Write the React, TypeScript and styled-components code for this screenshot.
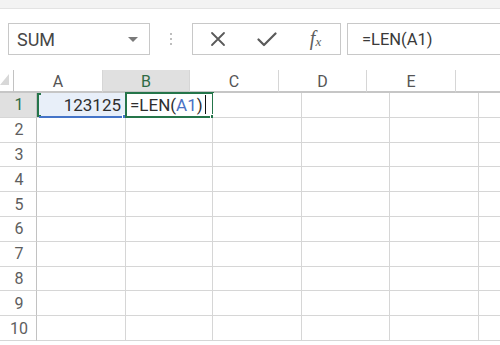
import React from "react";
import styled, { createGlobalStyle } from "styled-components";

const GlobalStyle = createGlobalStyle`
  html, body { margin: 0; padding: 0; background: #ffffff; }
  body {
    font-family: Roboto, "Liberation Sans", sans-serif;
    width: 500px;
    height: 345px;
    overflow: hidden;
  }
`;

const GREEN = "#25754a";
const BLUE = "#4474c8";
const GRID = "#d6d6d6";

const COLUMNS = [
  { name: "A", width: 89 },
  { name: "B", width: 87 },
  { name: "C", width: 89 },
  { name: "D", width: 88 },
  { name: "E", width: 89 },
  { name: "", width: 58 },
];

const ROWS = [1, 2, 3, 4, 5, 6, 7, 8, 9, 10];

const Page = styled.div`
  width: 500px;
  height: 345px;
  overflow: hidden;
  background: #fff;
`;

const TopStrip = styled.div`
  height: 8px;
  background: #f3f3f3;
  border-bottom: 1px solid #e3e3e3;
`;

const Bar = styled.div`
  display: flex;
  height: 32px;
  margin-top: 14px;
  padding-left: 8px;
`;

const NameBox = styled.div`
  box-sizing: border-box;
  width: 142px;
  border: 1px solid #c8c8c8;
  display: flex;
  align-items: center;
  justify-content: space-between;
  padding: 0 11px 0 8px;
  font-size: 18px;
  color: #474747;
`;

const Caret = styled.span`
  width: 0;
  height: 0;
  border-left: 5px solid transparent;
  border-right: 5px solid transparent;
  border-top: 5px solid #7a7a7a;
`;

const Dots = styled.div`
  width: 42px;
  display: flex;
  flex-direction: column;
  align-items: center;
  justify-content: center;
  gap: 3px;
`;

const Dot = styled.span`
  width: 2px;
  height: 2px;
  border-radius: 50%;
  background: #a8a8a8;
`;

const ButtonGroup = styled.div`
  box-sizing: border-box;
  width: 149px;
  border: 1px solid #c8c8c8;
  display: flex;
`;

const IconButton = styled.div`
  flex: 1;
  display: flex;
  align-items: center;
  justify-content: center;
  color: #5a5a5a;
`;

const Fx = styled.span`
  font-family: "Liberation Serif", "DejaVu Serif", serif;
  font-style: italic;
  font-size: 20px;
  color: #5e5e5e;
  padding-bottom: 2px;
  sub {
    font-size: 13px;
    vertical-align: -1px;
  }
`;

const FormulaInput = styled.div`
  box-sizing: border-box;
  flex: 1;
  margin-left: 6px;
  border: 1px solid #c8c8c8;
  border-right: none;
  display: flex;
  align-items: center;
  padding-left: 14px;
  font-size: 16.5px;
  color: #3a3a3a;
`;

const Sheet = styled.div`
  margin-top: 15px;
`;

const HeaderRow = styled.div`
  display: flex;
  height: 23px;
`;

const Corner = styled.div`
  box-sizing: border-box;
  width: 37px;
  border-right: 1px solid #c2c2c2;
  border-bottom: 2px solid #c6c6c6;
  display: flex;
  justify-content: flex-end;
  align-items: flex-end;
  padding: 0 4px 6px 0;
`;

const CornerTriangle = styled.span`
  width: 0;
  height: 0;
  border-left: 9px solid transparent;
  border-bottom: 11px solid #d8d8d8;
`;

const ColHeader = styled.div<{ $w: number; $active?: boolean }>`
  box-sizing: border-box;
  width: ${(p) => p.$w}px;
  flex: none;
  border-right: 1px solid ${GRID};
  border-bottom: 2px solid #c6c6c6;
  background: ${(p) => (p.$active ? "#e0e0e0" : "#fff")};
  display: flex;
  align-items: center;
  justify-content: center;
  font-size: 16px;
  color: ${(p) => (p.$active ? "#2f6b45" : "#555")};
  padding-top: 1px;
`;

const Row = styled.div`
  display: flex;
  height: 24.8px;
`;

const RowHeader = styled.div<{ $active?: boolean }>`
  box-sizing: border-box;
  width: 37px;
  flex: none;
  border-right: 1px solid #c2c2c2;
  border-bottom: 1px solid ${GRID};
  background: ${(p) => (p.$active ? "#e0e0e0" : "#fff")};
  display: flex;
  align-items: center;
  justify-content: center;
  padding-left: 2px;
  font-size: 16px;
  color: ${(p) => (p.$active ? "#2f6b45" : "#5e5e5e")};
`;

const Cell = styled.div<{ $w: number; $tint?: boolean; $align?: "left" | "right" }>`
  box-sizing: border-box;
  position: relative;
  width: ${(p) => p.$w}px;
  flex: none;
  border-right: 1px solid ${GRID};
  border-bottom: 1px solid ${GRID};
  background: ${(p) => (p.$tint ? "#e8eff9" : "#fff")};
  display: flex;
  align-items: center;
  justify-content: ${(p) => (p.$align === "right" ? "flex-end" : "flex-start")};
  padding: 0 4px 0 4px;
  font-size: 17px;
  color: #2e2e2e;
  white-space: nowrap;
`;

const RefBracket = styled.span`
  position: absolute;
  left: 0;
  top: 0;
  bottom: 0;
  width: 2px;
  background: ${GREEN};
  &::before,
  &::after {
    content: "";
    position: absolute;
    left: 0;
    width: 4px;
    height: 2px;
    background: ${GREEN};
  }
  &::before { top: 0; }
  &::after { bottom: 0; }
`;

const RefUnderline = styled.span`
  position: absolute;
  left: 2px;
  right: 0;
  bottom: -1px;
  height: 2px;
  background: ${BLUE};
`;

const Handle = styled.span<{ $color: string }>`
  position: absolute;
  width: 5px;
  height: 5px;
  background: ${(p) => p.$color};
  border: 1px solid #fff;
`;

const EditBox = styled.span`
  position: absolute;
  left: -1px;
  top: -1px;
  right: -2px;
  bottom: -1px;
  border: 2px solid ${GREEN};
  pointer-events: none;
`;

const RefText = styled.span`
  color: #4a72c4;
`;

const TextCursor = styled.span`
  display: inline-block;
  width: 1.5px;
  height: 19px;
  background: #111;
  margin-left: 2px;
`;

function CloseIcon() {
  return (
    <svg width="16" height="16" viewBox="0 0 16 16" fill="none">
      <path d="M2 2 L14 14 M14 2 L2 14" stroke="#5a5a5a" strokeWidth="1.8" strokeLinecap="round" />
    </svg>
  );
}

function CheckIcon() {
  return (
    <svg width="20" height="15" viewBox="0 0 20 15" fill="none">
      <path d="M1.5 7.5 L7 13 L18.5 1.5" stroke="#5a5a5a" strokeWidth="2.2" strokeLinecap="round" strokeLinejoin="round" />
    </svg>
  );
}

function renderCell(row: number, colIdx: number, width: number) {
  if (row === 1 && colIdx === 0) {
    return (
      <Cell key={colIdx} $w={width} $tint $align="right">
        123125
        <RefBracket />
        <RefUnderline />
        <Handle $color={BLUE} style={{ right: -4, bottom: -4 }} />
      </Cell>
    );
  }
  if (row === 1 && colIdx === 1) {
    return (
      <Cell key={colIdx} $w={width}>
        =LEN(<RefText>A1</RefText>)
        <TextCursor />
        <EditBox />
        <Handle $color={GREEN} style={{ right: -5, bottom: -4 }} />
      </Cell>
    );
  }
  return <Cell key={colIdx} $w={width} />;
}

export default function App() {
  return (
    <Page>
      <GlobalStyle />
      <TopStrip />
      <Bar>
        <NameBox>
          SUM
          <Caret />
        </NameBox>
        <Dots>
          <Dot />
          <Dot />
          <Dot />
        </Dots>
        <ButtonGroup>
          <IconButton>
            <CloseIcon />
          </IconButton>
          <IconButton>
            <CheckIcon />
          </IconButton>
          <IconButton>
            <Fx>
              f<sub>x</sub>
            </Fx>
          </IconButton>
        </ButtonGroup>
        <FormulaInput>=LEN(A1)</FormulaInput>
      </Bar>
      <Sheet>
        <HeaderRow>
          <Corner>
            <CornerTriangle />
          </Corner>
          {COLUMNS.map((c) => (
            <ColHeader key={c.name || "F"} $w={c.width} $active={c.name === "B"}>
              {c.name}
            </ColHeader>
          ))}
        </HeaderRow>
        {ROWS.map((r) => (
          <Row key={r}>
            <RowHeader $active={r === 1}>{r}</RowHeader>
            {COLUMNS.map((c, i) => renderCell(r, i, c.width))}
          </Row>
        ))}
      </Sheet>
    </Page>
  );
}
